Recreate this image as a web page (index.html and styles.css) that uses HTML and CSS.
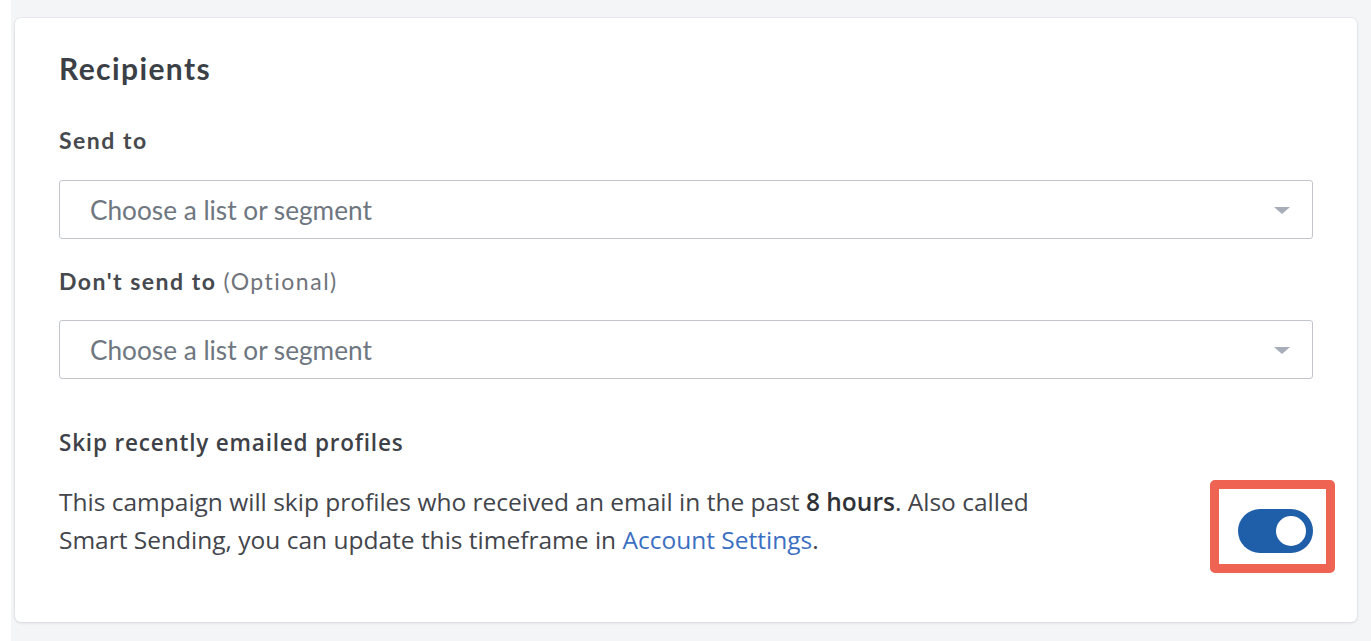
FILE: index.html
```html
<!DOCTYPE html>
<html lang="en">
<head>
<meta charset="utf-8">
<title>Recipients</title>
<link rel="stylesheet" href="styles.css">
</head>
<body>
<div class="page">
  <section class="card">
    <h2 class="title">Recipients</h2>

    <div class="field">
      <div class="label">Send to</div>
      <div class="select">
        <span class="placeholder">Choose a list or segment</span>
        <span class="caret"></span>
      </div>
    </div>

    <div class="field field-second">
      <div class="label">Don't send to <span class="optional">(Optional)</span></div>
      <div class="select">
        <span class="placeholder">Choose a list or segment</span>
        <span class="caret"></span>
      </div>
    </div>

    <div class="skip">
      <div class="skip-title">Skip recently emailed profiles</div>
      <div class="skip-row">
        <p class="skip-text">This campaign will skip profiles who received an email in the past <strong>8 hours</strong>. Also called Smart Sending, you can update this timeframe in <a class="link" href="#">Account Settings</a>.</p>
        <div class="toggle-wrap">
          <span class="highlight"></span>
          <span class="toggle"><span class="knob"></span></span>
        </div>
      </div>
    </div>
  </section>
</div>
</body>
</html>
```

FILE: styles.css
```css
* { box-sizing: border-box; }

html, body {
  margin: 0;
  padding: 0;
  background: #ffffff;
  height: 100%;
}

.page {
  margin-left: 11px;
  min-height: 641px;
  background: #f4f5f7;
  padding: 18px 14px 19px 4px;
}

.card {
  background: #ffffff;
  border-radius: 6px;
  box-shadow: 0 1px 3px rgba(30, 40, 60, 0.12), 0 0 0 1px rgba(30, 40, 60, 0.03);
  padding: 34px 44px 63px 44px;
  height: 604px;
}

.title {
  margin: 0;
  font-family: Lato, "Liberation Sans", sans-serif;
  font-weight: 700;
  font-size: 30px;
  letter-spacing: 1.4px;
  line-height: 32px;
  color: #3b3f46;
}

.field { margin-top: 43px; }
.field-second { margin-top: 29px; }

.label {
  font-family: Lato, "Liberation Sans", sans-serif;
  font-weight: 700;
  font-size: 23px;
  letter-spacing: 1.5px;
  line-height: 26px;
  color: #46494e;
}

.optional {
  font-weight: 400;
  color: #6f747b;
}

.select {
  margin-top: 27px;
  height: 59px;
  border: 1.5px solid #c2c6cc;
  border-radius: 3px;
  display: flex;
  align-items: center;
  justify-content: space-between;
  padding: 0 22px 0 30px;
}

.field-second .select { margin-top: 26px; }

.placeholder {
  font-family: Lato, "Liberation Sans", sans-serif;
  font-size: 26.2px;
  color: #6e7680;
}

.caret {
  width: 0;
  height: 0;
  border-left: 8px solid transparent;
  border-right: 8px solid transparent;
  border-top: 7px solid #a6adb8;
  margin-top: 2px;
}

.skip { margin-top: 50px; }

.skip-title {
  font-family: "Open Sans", "Noto Sans", sans-serif;
  font-weight: 600;
  font-size: 22.5px;
  letter-spacing: 0.8px;
  line-height: 28px;
  color: #3e4147;
}

.skip-row {
  margin-top: 26px;
  display: flex;
  justify-content: space-between;
  align-items: flex-start;
}

.skip-text {
  margin: 0;
  max-width: 990px;
  font-family: "Open Sans", "Noto Sans", sans-serif;
  font-size: 24.5px;
  line-height: 38px;
  color: #42454b;
}

.skip-text strong {
  font-weight: 600;
  color: #2f3237;
}

.link {
  color: #3b6fc2;
  text-decoration: none;
}

.toggle-wrap {
  position: relative;
  margin-top: 26px;
  flex: none;
}

.highlight {
  position: absolute;
  left: -28px;
  top: -29px;
  width: 125px;
  height: 93px;
  border: 9px solid #ee6351;
  border-radius: 5px;
}

.toggle {
  position: relative;
  display: flex;
  align-items: center;
  justify-content: flex-end;
  width: 75px;
  height: 44px;
  border-radius: 22px;
  background: #1f5ea8;
  padding-right: 7px;
}

.knob {
  width: 30px;
  height: 30px;
  border-radius: 50%;
  background: #ffffff;
}
```
